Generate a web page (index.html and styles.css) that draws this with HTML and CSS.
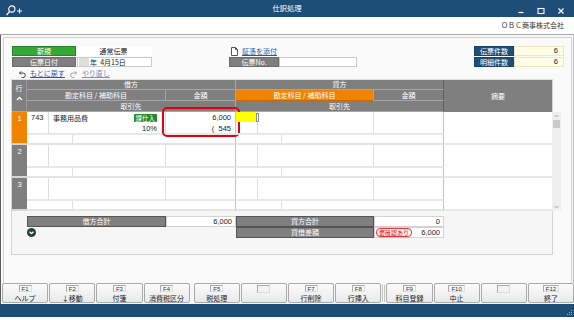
FILE: index.html
```html
<!DOCTYPE html>
<html lang="ja">
<head>
    <meta charset="UTF-8">
    <title>仕訳処理</title>
    <link rel="stylesheet" href="styles.css">
</head>
<body>

    <div class="titlebar">
        <svg class="app-icon" width="24" height="17" viewBox="0 0 24 17">
            <circle cx="11.8" cy="9" r="3.1" fill="none" stroke="#fff" stroke-width="1.1"/>
            <path d="M9.6 11.3 L6.6 15" stroke="#fff" stroke-width="1.2" fill="none"/>
            <path d="M17 11h5M19.5 8.5v5" stroke="#fff" stroke-width="1" fill="none"/>
        </svg>
        <span class="title">仕訳処理</span>
        <div class="win-buttons">
            <svg width="8" height="17" viewBox="0 0 8 17"><path d="M1.5 12.5h5" stroke="#fff" stroke-width="1.2"/></svg>
            <svg width="8" height="17" viewBox="0 0 8 17"><rect x="1" y="8.5" width="6" height="5" fill="none" stroke="#fff" stroke-width="1.1"/></svg>
            <svg width="8" height="17" viewBox="0 0 8 17"><path d="M1.5 8.5l5 5M6.5 8.5l-5 5" stroke="#fff" stroke-width="1.2"/></svg>
        </div>
    </div>

    <div class="company">ＯＢＣ商事株式会社</div>

    <div class="main">
        <div class="inner">

            <div class="fields">
                <div class="fgroup left">
                    <div class="lbl green">新規</div>
                    <div class="val plain">通常伝票</div>
                    <div class="lbl gray">伝票日付</div>
                    <div class="val input"><span class="era"></span>年&nbsp;&nbsp;4月15日</div>
                </div>
                <div class="fgroup mid">
                    <div class="attach">
                        <svg width="7" height="9" viewBox="0 0 7 9"><path d="M0.5 0.5h4l2 2v6h-6z M4.5 0.5v2h2" fill="#fff" stroke="#444" stroke-width="0.9"/></svg>
                        <a href="#">証憑を添付</a>
                    </div>
                    <div class="lbl gray">伝票No.</div>
                    <div class="val input"></div>
                </div>
                <div class="fgroup right">
                    <div class="lbl navy">伝票件数</div>
                    <div class="val count">6</div>
                    <div class="lbl navy">明細件数</div>
                    <div class="val count">6</div>
                </div>
            </div>

            <div class="undo">
                <svg width="8" height="8" viewBox="0 0 8 8"><path d="M1.5 3h3.5a2.3 2.3 0 0 1 0 4.6H3.5 M3.2 1.3L1.5 3l1.7 1.7" fill="none" stroke="#333" stroke-width="0.9"/></svg>
                <a href="#" class="link">もとに戻す</a>
                <svg class="redo-icon" width="8" height="8" viewBox="0 0 8 8"><path d="M6.5 3H3a2.3 2.3 0 0 0 0 4.6h1.5 M4.8 1.3L6.5 3 4.8 4.7" fill="none" stroke="#999" stroke-width="0.9"/></svg>
                <a href="#" class="link off">やり直し</a>
            </div>

            <div class="panel">
                <div class="grid-head">
                    <div class="hc rowhead">
                        <span>行</span>
                        <svg width="7" height="5" viewBox="0 0 7 5"><path d="M1 4l2.5-2.5L6 4" fill="none" stroke="#fff" stroke-width="1.3"/></svg>
                    </div>
                    <div class="hc span3">借方</div>
                    <div class="hc span3 split">貸方</div>
                    <div class="hc memo-head">摘要</div>
                    <div class="hc span2">勘定科目 / 補助科目</div>
                    <div class="hc">金額</div>
                    <div class="hc span2 selected">勘定科目 / 補助科目</div>
                    <div class="hc split">金額</div>
                    <div class="hc span3">取引先</div>
                    <div class="hc span3 split">取引先</div>
                </div>

                <div class="body-wrap">
                    <div class="grid-body">
                        <div class="row">
                            <div class="rn active">1</div>
                            <div class="cell code num">743</div>
                            <div class="cell name">
                                <div class="line between"><span>事務用品費</span><span class="tax">課仕入</span></div>
                                <div class="line second right num">10%</div>
                            </div>
                            <div class="cell amt">
                                <div class="line right num">6,000</div>
                                <div class="line second right num keep">(&nbsp;&nbsp;545</div>
                                <div class="focus"></div>
                            </div>
                            <div class="cell code"><span class="edit"></span><span class="caret"></span></div>
                            <div class="cell name"></div>
                            <div class="cell amt"></div>
                            <div class="memo"></div>
                            <div class="sub"><div class="part"></div><div class="part"></div></div>
                            <div class="sub"><div class="part"></div><div class="part"></div></div>
                        </div>
                        <div class="row">
                            <div class="rn">2</div>
                            <div class="cell code"></div>
                            <div class="cell name"></div>
                            <div class="cell amt"></div>
                            <div class="cell code"></div>
                            <div class="cell name"></div>
                            <div class="cell amt"></div>
                            <div class="memo"></div>
                            <div class="sub"><div class="part"></div><div class="part"></div></div>
                            <div class="sub"><div class="part"></div><div class="part"></div></div>
                        </div>
                        <div class="row">
                            <div class="rn">3</div>
                            <div class="cell code"></div>
                            <div class="cell name"></div>
                            <div class="cell amt"></div>
                            <div class="cell code"></div>
                            <div class="cell name"></div>
                            <div class="cell amt"></div>
                            <div class="memo"></div>
                            <div class="sub"><div class="part"></div><div class="part"></div></div>
                            <div class="sub"><div class="part"></div><div class="part"></div></div>
                        </div>
                    </div>
                    <div class="scrollbar">
                        <svg width="9" height="8" viewBox="0 0 9 8"><path d="M2.5 5l2-2 2 2" fill="none" stroke="#999" stroke-width="0.8"/></svg>
                        <div class="thumb"></div>
                        <div class="track"></div>
                        <svg width="9" height="8" viewBox="0 0 9 8"><path d="M2.5 3l2 2 2-2" fill="none" stroke="#999" stroke-width="0.8"/></svg>
                    </div>
                </div>

                <div class="totals">
                    <div class="tl">借方合計</div>
                    <div class="tv num">6,000</div>
                    <div class="tl">貸方合計</div>
                    <div class="tv num">0</div>
                    <div class="tbtn">
                        <svg width="9" height="9" viewBox="0 0 9 9"><circle cx="4.5" cy="4.5" r="4.5" fill="#26403f"/><path d="M2.6 3.7l1.9 1.9 1.9-1.9" fill="none" stroke="#fff" stroke-width="1.3"/></svg>
                    </div>
                    <div></div>
                    <div class="tl">貸借差額</div>
                    <div class="tv diff"><span class="warn">要確認あり</span><span class="num">6,000</span></div>
                </div>
            </div>

        </div>
    </div>

    <div class="fkeys">
        <div class="kgroup">
            <div class="fkey"><span class="key">F1</span><span>ヘルプ</span></div>
            <div class="fkey"><span class="key">F2</span><span>↓移動</span></div>
            <div class="fkey"><span class="key">F3</span><span>付箋</span></div>
            <div class="fkey"><span class="key">F4</span><span>消費税区分</span></div>
        </div>
        <div class="kgroup second">
            <div class="fkey"><span class="key">F5</span><span>税処理</span></div>
            <div class="fkey"><span class="key blank"></span><span></span></div>
            <div class="fkey"><span class="key">F7</span><span>行削除</span></div>
            <div class="fkey"><span class="key">F8</span><span>行挿入</span></div>
        </div>
        <div class="sep"></div>
        <div class="kgroup">
            <div class="fkey"><span class="key">F9</span><span>科目登録</span></div>
            <div class="fkey"><span class="key">F10</span><span>中止</span></div>
            <div class="fkey"><span class="key blank"></span><span></span></div>
            <div class="fkey"><span class="key">F12</span><span>終了</span></div>
        </div>
    </div>

    <div class="status">
        <svg width="8" height="8" viewBox="0 0 8 8">
            <rect x="6" y="2" width="1" height="1" fill="#9fb3c8"/>
            <rect x="4" y="4" width="1" height="1" fill="#9fb3c8"/>
            <rect x="6" y="4" width="1" height="1" fill="#9fb3c8"/>
            <rect x="2" y="6" width="1" height="1" fill="#9fb3c8"/>
            <rect x="4" y="6" width="1" height="1" fill="#9fb3c8"/>
            <rect x="6" y="6" width="1" height="1" fill="#9fb3c8"/>
        </svg>
    </div>

</body>
</html>
```

FILE: styles.css
```css
* {
    box-sizing: border-box;
}
body {
    margin: 0;
    width: 574px;
    height: 320px;
    overflow: hidden;
    background: #fff;
    font-family: "Noto Sans CJK JP", sans-serif;
    font-size: 7px;
    line-height: 1;
    color: #222;
}
.num {
    font-family: "Liberation Sans", "Noto Sans CJK JP", sans-serif;
    font-size: 7.5px;
}

/* title bar */
.titlebar {
    height: 17px;
    background: #1e4d78;
    color: #fff;
    display: grid;
    grid-template-columns: 1fr auto 1fr;
    align-items: center;
}
.app-icon {
    display: block;
}
.title {
    font-size: 7.3px;
    padding-top: 1px;
}
.win-buttons {
    justify-self: end;
    display: flex;
    gap: 12px;
    margin-right: 9px;
}
.win-buttons svg {
    display: block;
}

.company {
    height: 18px;
    line-height: 17px;
    text-align: right;
    padding-right: 10px;
    border-bottom: 1px solid #a9a9a9;
    color: #333;
}

/* main area */
.main {
    height: 248px;
    background: #f9f9f9;
    border-left: 1px solid #5c5c5c;
    border-right: 1px solid #bdbdbd;
    padding: 2px 1px 0 2px;
}
.inner {
    height: 246px;
    border: 1px solid #d2d2d2;
    border-bottom: none;
    background: #fafafa;
    padding: 8px 0 0 8px;
}

.fields {
    display: flex;
    height: 21px;
}
.fgroup {
    display: grid;
    grid-template-rows: 10px 10px;
    row-gap: 1px;
}
.fgroup.left {
    grid-template-columns: 64px 75px;
    column-gap: 1px;
}
.fgroup.mid {
    grid-template-columns: 50px 78px;
    margin-left: 77px;
}
.fgroup.right {
    grid-template-columns: 40px 50px;
    margin-left: 117px;
}
.lbl {
    color: #fff;
    text-align: center;
    line-height: 9px;
}
.green {
    background: #36a836;
    border: 1px solid #24862a;
}
.gray {
    background: #7f7f7f;
    border: 1px solid #6c6c6c;
}
.navy {
    background: #1f4e79;
    border: 1px solid #1a4168;
}
.val {
    background: #fff;
    line-height: 10px;
}
.val.plain {
    text-align: center;
    padding-right: 2px;
}
.val.input {
    border: 1px solid #cacaca;
    display: flex;
    align-items: center;
    line-height: 8px;
    padding-left: 1px;
}
.era {
    width: 10px;
    height: 8px;
    background: #dedede;
    margin-right: 1px;
}
.val.count {
    background: #fffde4;
    border: 1px solid #ebe7c8;
    text-align: right;
    padding-right: 5px;
    line-height: 8px;
    font-family: "Liberation Sans", sans-serif;
    font-size: 7.5px;
}
.attach {
    grid-column: 1 / 3;
    display: flex;
    align-items: center;
    gap: 4px;
    padding-left: 2px;
}
.attach svg {
    display: block;
}
.attach a {
    color: #2a55a8;
}

.undo {
    height: 11px;
    margin-top: 1px;
    display: flex;
    align-items: center;
    padding-left: 6px;
}
.undo svg {
    display: block;
    margin-right: 4px;
}
.undo .redo-icon {
    margin-left: 5px;
}
.link {
    color: #2a55a8;
}
.link.off {
    color: #7d8fb0;
}

/* grid panel */
.panel {
    width: 542px;
    height: 176px;
    margin-left: -1px;
    border: 1px solid #d4d4d4;
    border-top-color: #e0e0e0;
    background: #f6f6f6;
}
.grid-head,
.row {
    display: grid;
    grid-template-columns: 15px 22px 117px 70px 22px 116px 70px 108px;
}
.grid-head {
    grid-template-rows: 10px 11px 11px;
    background: #7f7f7f;
}
.hc {
    color: #fff;
    text-align: center;
    border-right: 1px solid #a6a6a6;
    border-bottom: 1px solid #a6a6a6;
    display: flex;
    align-items: center;
    justify-content: center;
}
.hc.span2 {
    grid-column: span 2;
}
.hc.span3 {
    grid-column: span 3;
}
.hc.split {
    border-right-color: #5e5e5e;
}
.hc.rowhead {
    grid-row: span 3;
    flex-direction: column;
    justify-content: flex-start;
    padding-top: 5px;
    gap: 4px;
    border-right-color: #9a9a9a;
}
.hc.rowhead svg {
    display: block;
}
.hc.memo-head {
    grid-row: span 3;
    border-right: none;
    border-bottom: none;
}
.hc.selected {
    background: #f08300;
    border-bottom-color: #c86c00;
}

.body-wrap {
    display: flex;
    background: #fff;
}
.grid-body {
    width: 540px;
    flex-shrink: 0;
}
.row {
    grid-template-rows: 23px 10px;
}
.rn {
    grid-row: span 2;
    background: #7f7f7f;
    color: #fff;
    text-align: center;
    padding-top: 3px;
    border-bottom: 2px solid #d6d6d6;
    font-family: "Liberation Sans", sans-serif;
    font-size: 7.5px;
}
.rn.active {
    background: #f08300;
}
.cell {
    border-right: 1px solid #dedede;
    border-bottom: 2px solid #e8e8e8;
    padding: 2px 4px 0 4px;
    position: relative;
}
.cell.amt {
    border-right-color: #c4c4c4;
}
.line {
    height: 8px;
    line-height: 8px;
    white-space: nowrap;
}
.line.second {
    margin-top: 3px;
}
.line.right {
    text-align: right;
}
.line.between {
    display: flex;
    justify-content: space-between;
    padding-right: 4px;
}
.cell.name .line.second {
    padding-right: 4px;
}
.tax {
    background: #208a2c;
    color: #fff;
    font-size: 6.5px;
    line-height: 8px;
    padding: 0 2px;
    border-radius: 1px;
}
.keep {
    white-space: pre;
}
.focus {
    position: absolute;
    left: -4px;
    top: -5px;
    width: 78px;
    height: 30px;
    border: 2.5px solid #e50012;
    border-radius: 5px;
}
.edit {
    position: absolute;
    left: 0;
    top: 0;
    width: 20px;
    height: 10px;
    background: #ffff00;
}
.caret {
    position: absolute;
    left: 20px;
    top: 1px;
    width: 3px;
    height: 9px;
    border: 1px solid #8c8c8c;
    background: #fff;
}
.memo {
    grid-row: span 2;
    border-bottom: 2px solid #e8e8e8;
}
.sub {
    grid-column: span 3;
    display: flex;
    border-bottom: 2px solid #e4e4e4;
    border-right: 1px solid #c4c4c4;
}
.sub .part:first-child {
    width: 46px;
    border-right: 1px solid #e0e0e0;
}

.scrollbar {
    width: 9px;
    flex-shrink: 0;
    background: #efefef;
    display: flex;
    flex-direction: column;
    align-items: center;
}
.scrollbar svg {
    display: block;
}
.thumb {
    width: 7px;
    height: 8px;
    background: #c9c9c9;
}
.track {
    flex: 1;
}

.totals {
    display: grid;
    grid-template-columns: 139px 70px 138px 70px;
    grid-template-rows: 11px 11px;
    margin: 5px 0 0 15px;
}
.tl {
    background: #7f7f7f;
    border: 1px solid #555;
    color: #fff;
    text-align: center;
    line-height: 9px;
}
.tv {
    background: #fff;
    border: 1px solid #d2d2d2;
    text-align: right;
    padding-right: 3px;
    line-height: 9px;
}
.tv.diff {
    display: flex;
    justify-content: space-between;
    align-items: center;
    padding-left: 1px;
}
.warn {
    border: 1px solid #e33;
    border-radius: 4px;
    background: #fff0f0;
    color: #d01a1a;
    font-size: 6px;
    line-height: 7px;
    padding: 0 2px;
}
.tbtn {
    padding-top: 1px;
}
.tbtn svg {
    display: block;
}

/* function keys */
.fkeys {
    height: 21px;
    display: flex;
    padding-left: 1px;
    background: #f7f7f7;
    border-left: 1px solid #5c5c5c;
}
.kgroup {
    width: 188px;
    height: 20px;
    display: flex;
    gap: 1px;
}
.kgroup.second {
    margin-left: 4px;
}
.sep {
    width: 3px;
    margin: 2px 1px;
    border-left: 1px solid #c4c4c4;
    border-right: 1px solid #c4c4c4;
}
.fkey {
    flex: 1;
    border: 1px solid #aaa;
    border-radius: 2px;
    background: linear-gradient(#fbfbfb, #e9e9e9);
    display: flex;
    flex-direction: column;
    align-items: center;
    color: #222;
}
.key {
    min-width: 13px;
    height: 7px;
    margin-top: 1px;
    padding: 0 2px;
    font-family: "Liberation Sans", sans-serif;
    font-size: 6px;
    line-height: 6px;
    text-align: center;
    color: #333;
    border: 1px solid;
    border-color: #a8a8a8 #dcdcdc #dcdcdc #a8a8a8;
}
.key.blank {
    width: 13px;
    height: 8px;
    background: #f2f2f2;
}
.fkey span:last-child {
    margin-top: 2px;
    line-height: 8px;
}

.status {
    height: 13px;
    background: #1e4d78;
    display: flex;
    justify-content: flex-end;
    align-items: flex-end;
    padding: 0 1px 1px 0;
}
.status svg {
    display: block;
}
```
